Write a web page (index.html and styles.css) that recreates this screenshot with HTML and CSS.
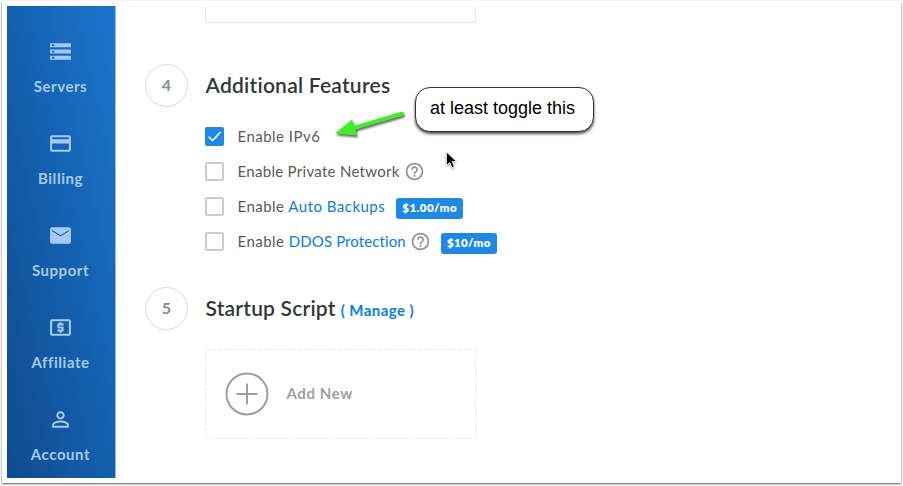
FILE: index.html
```html
<!DOCTYPE html>
<html lang="en">
<head>
<meta charset="utf-8">
<title>Deploy server</title>
<link rel="stylesheet" href="styles.css">
</head>
<body>
<div class="frame">
  <nav class="sidebar">
    <a class="nav-item"><svg class="nav-icon" viewBox="0 0 24 24"><path fill-rule="evenodd" d="M2 20h20v-4H2v4zm2-3h2v2H4v-2zM2 4v4h20V4H2zm4 3H4V5h2v2zm-4 7h20v-4H2v4zm2-3h2v2H4v-2z"/></svg><span>Servers</span></a>
    <a class="nav-item"><svg class="nav-icon" viewBox="0 0 24 24"><path d="M20 4H4c-1.11 0-2 .89-2 2v12c0 1.11.89 2 2 2h16c1.11 0 2-.89 2-2V6c0-1.11-.89-2-2-2zm0 14H4v-6h16v6zm0-10H4V6h16v2z"/></svg><span>Billing</span></a>
    <a class="nav-item"><svg class="nav-icon" viewBox="0 0 24 24"><path d="M20 4H4c-1.1 0-2 .9-2 2v12c0 1.1.9 2 2 2h16c1.1 0 2-.9 2-2V6c0-1.1-.9-2-2-2zm0 4l-8 5-8-5V6.700l8 5 8-5V8z"/></svg><span>Support</span></a>
    <a class="nav-item"><svg class="nav-icon" viewBox="0 0 24 24"><path d="M11 17h2v-1h1c.55 0 1-.45 1-1v-3c0-.55-.45-1-1-1h-3v-1h4V8h-2V7h-2v1h-1c-.55 0-1 .45-1 1v3c0 .55.45 1 1 1h3v1H9v2h2v1zm9-13H4c-1.110 0-2 .890-2 2v12c0 1.110.890 2 2 2h16c1.110 0 2-.890 2-2V6c0-1.110-.890-2-2-2zm0 14H4V6h16v12z"/></svg><span>Affiliate</span></a>
    <a class="nav-item"><svg class="nav-icon" viewBox="0 0 24 24"><path d="M12 5.900c1.160 0 2.100.940 2.100 2.100s-.940 2.100-2.100 2.100S9.900 9.160 9.900 8s.940-2.100 2.100-2.100m0 9c2.970 0 6.100 1.460 6.100 2.100v1.100H5.900V17c0-.640 3.130-2.100 6.100-2.100M12 4C9.790 4 8 5.790 8 8s1.790 4 4 4 4-1.790 4-4-1.790-4-4-4zm0 9c-2.670 0-8 1.340-8 4v3h16v-3c0-2.660-5.330-4-8-4z"/></svg><span>Account</span></a>
  </nav>
  <main class="content">
    <div class="previous-card"></div>
    <section class="step">
      <div class="number">4</div>
      <div class="step-body">
        <h2 class="t-features">Additional Features</h2>
        <div class="options">
          <label class="option"><span class="box checked"><svg viewBox="0 0 18 18"><path d="M3.500 9.200l3.700 3.600 7.500-8"/></svg></span><span>Enable IPv6</span></label>
          <label class="option"><span class="box"></span><span class="t-private">Enable Private Network</span><svg class="help" viewBox="0 0 24 24"><path d="M11 18h2v-2h-2v2zm1-16C6.480 2 2 6.480 2 12s4.480 10 10 10 10-4.480 10-10S17.520 2 12 2zm0 18c-4.410 0-8-3.590-8-8s3.590-8 8-8 8 3.590 8 8-3.590 8-8 8zm0-14c-2.210 0-4 1.790-4 4h2c0-1.100.900-2 2-2s2 .900 2 2c0 2-3 1.750-3 5h2c0-2.250 3-2.500 3-5 0-2.210-1.790-4-4-4z"/></svg></label>
          <label class="option"><span class="box"></span><span>Enable <a>Auto Backups</a></span><b class="price price-backups">$1.00/mo</b></label>
          <label class="option"><span class="box"></span><span>Enable <a class="t-ddos">DDOS Protection</a></span><svg class="help" viewBox="0 0 24 24"><path d="M11 18h2v-2h-2v2zm1-16C6.480 2 2 6.480 2 12s4.480 10 10 10 10-4.480 10-10S17.520 2 12 2zm0 18c-4.410 0-8-3.590-8-8s3.590-8 8-8 8 3.590 8 8-3.590 8-8 8zm0-14c-2.210 0-4 1.790-4 4h2c0-1.100.900-2 2-2s2 .900 2 2c0 2-3 1.750-3 5h2c0-2.250 3-2.500 3-5 0-2.210-1.790-4-4-4z"/></svg><b class="price price-ddos">$10/mo</b></label>
        </div>
      </div>
    </section>
    <section class="step step-last">
      <div class="number">5</div>
      <div class="step-body">
        <h2><span class="t-startup">Startup Script</span><a class="manage">( Manage )</a></h2>
        <div class="add-card">
          <svg class="dashes" viewBox="0 0 271 90"><rect x=".5" y=".5" width="270" height="89" rx="3"/></svg>
          <svg class="plus" viewBox="0 0 44 44"><circle cx="22" cy="22" r="20.500"/><path d="M11.500 22h21M22 11.500v21"/></svg>
          <span class="t-add">Add New</span>
        </div>
      </div>
    </section>
  </main>
</div>
<svg class="arrow" viewBox="0 0 80 40"><path d="M5 23.500L22 9.500l2 6.300L71 1.800q2.500-.5 3 1.200t-1.500 2.700L25.500 19.500l1.500 6z"/></svg>
<div class="callout"><span>at least toggle this</span></div>
<svg class="cursor" viewBox="0 0 14 20"><path d="M1.500 1v13.500l3.200-3 2.300 5.300 2.300-1-2.200-5.200h4.300z"/></svg>
</body>
</html>
```

FILE: styles.css
```css
* { box-sizing: border-box; }
body {
  margin: 0;
  height: 486px;
  overflow: hidden;
  background: #fff;
  font-family: Lato, "Open Sans", sans-serif;
  font-variant-ligatures: none;
}
.frame {
  display: flex;
  width: 899px;
  height: 482px;
  margin: 1px 2px 3px;
  padding: 5px;
  background: #fff;
  box-shadow: 0 1px 2px rgba(0, 0, 0, .65);
}
.sidebar {
  flex: none;
  width: 109px;
  height: 472px;
  padding: 21px 1px 0 0;
  overflow: hidden;
  border-right: 1px solid #8abcec;
  background: linear-gradient(77deg, #104b8e 0%, #135ca9 42%, #1b76ce 100%);
  color: #a5caf3;
}
.nav-item {
  display: flex;
  flex-direction: column;
  align-items: center;
  height: 92px;
  padding-top: 11.500px;
  gap: 11px;
  font-size: 15px;
  line-height: 22px;
  font-weight: 700;
  letter-spacing: .55px;
  white-space: nowrap;
}
.nav-item:last-child { height: 80px; }
.nav-icon { width: 25px; height: 25px; fill: currentColor; }
.content { padding-left: 29px; }
.previous-card {
  width: 271px;
  height: 17px;
  margin: 0 0 41px 60px;
  border: 1px solid #e5e5e7;
  border-width: 0 1px 1px;
  border-radius: 0 0 3px 3px;
}
.step { display: flex; gap: 18px; height: 223px; }
.step-last { height: 160px; }
.number {
  display: flex;
  flex: none;
  align-items: center;
  justify-content: center;
  width: 43px;
  height: 43px;
  margin-right: -1px;
  padding-bottom: 2px;
  border: 1px solid #d4dadd;
  border-radius: 50%;
  color: #858d92;
  font-size: 16px;
  font-weight: 700;
}
h2 {
  display: flex;
  align-items: baseline;
  height: 42px;
  margin: 0;
  padding-left: .5px;
  color: #33383b;
  font-size: 21px;
  line-height: 41px;
  font-weight: 600;
  white-space: nowrap;
}
.t-features { letter-spacing: .24px; }
.t-startup { letter-spacing: .2px; }
.manage { margin-left: 5px; color: #087ee2; font-size: 15px; font-weight: 700; letter-spacing: .45px; }
.options { padding-top: 12px; }
.option {
  display: flex;
  align-items: center;
  height: 35px;
  color: #555a5d;
  font-size: 15px;
  letter-spacing: .48px;
  white-space: nowrap;
}
.option a { color: #087be0; }
.t-private { letter-spacing: .3px; }
.option .t-ddos { letter-spacing: .1px; }
.box {
  flex: none;
  width: 19px;
  height: 19px;
  margin: 1px 13.500px 0 0;
  border: 2px solid #c8cdd0;
  border-radius: 2px;
}
.checked { border: 0; background: #1e88e5; }
.checked svg { display: block; width: 19px; height: 19px; fill: none; stroke: #fff; stroke-width: 1.500; }
.help { width: 21px; height: 21px; margin: 1px 0 0 4px; fill: #8f9498; }
.price {
  height: 21px;
  margin: 5px 0 0 11px;
  border-radius: 3px;
  background: #1e88e5;
  color: #fff;
  font-size: 11.500px;
  line-height: 20px;
  font-weight: 800;
  text-align: center;
}
.price-backups { width: 67px; }
.price-ddos { width: 56px; margin-left: 10px; letter-spacing: .35px; }
.add-card {
  display: flex;
  position: relative;
  align-items: center;
  width: 271px;
  height: 90px;
  margin-top: 20px;
  padding-left: 19.500px;
  color: #9ca1a5;
  font-size: 15px;
  font-weight: 700;
}
.t-add { padding-bottom: 2px; letter-spacing: .6px; }
.dashes { position: absolute; left: 0; top: 0; width: 271px; height: 90px; fill: none; stroke: #e8e8ea; stroke-dasharray: 3 2; }
.plus { width: 44px; height: 44px; margin-right: 18px; fill: none; stroke: #9a9fa3; stroke-width: 2; }
.arrow {
  position: absolute;
  left: 330px;
  top: 110px;
  width: 80px;
  height: 40px;
  fill: #40ed29;
  filter: drop-shadow(1px 2px 1px rgba(0, 0, 0, .6));
}
.callout {
  position: absolute;
  left: 415px;
  top: 87px;
  width: 179px;
  height: 45px;
  padding-left: 14px;
  border: 1px solid #333;
  border-radius: 15px;
  background: #fff;
  box-shadow: 0 2px 3px rgba(0, 0, 0, .7);
  color: #000;
  font: 18px/41px "Liberation Sans", Arial, sans-serif;
  white-space: nowrap;
}
.cursor {
  position: absolute;
  left: 445px;
  top: 151px;
  width: 14px;
  height: 20px;
  stroke: #fff;
  stroke-width: .8;
  filter: drop-shadow(0 1px 1px rgba(0, 0, 0, .4));
}
```
